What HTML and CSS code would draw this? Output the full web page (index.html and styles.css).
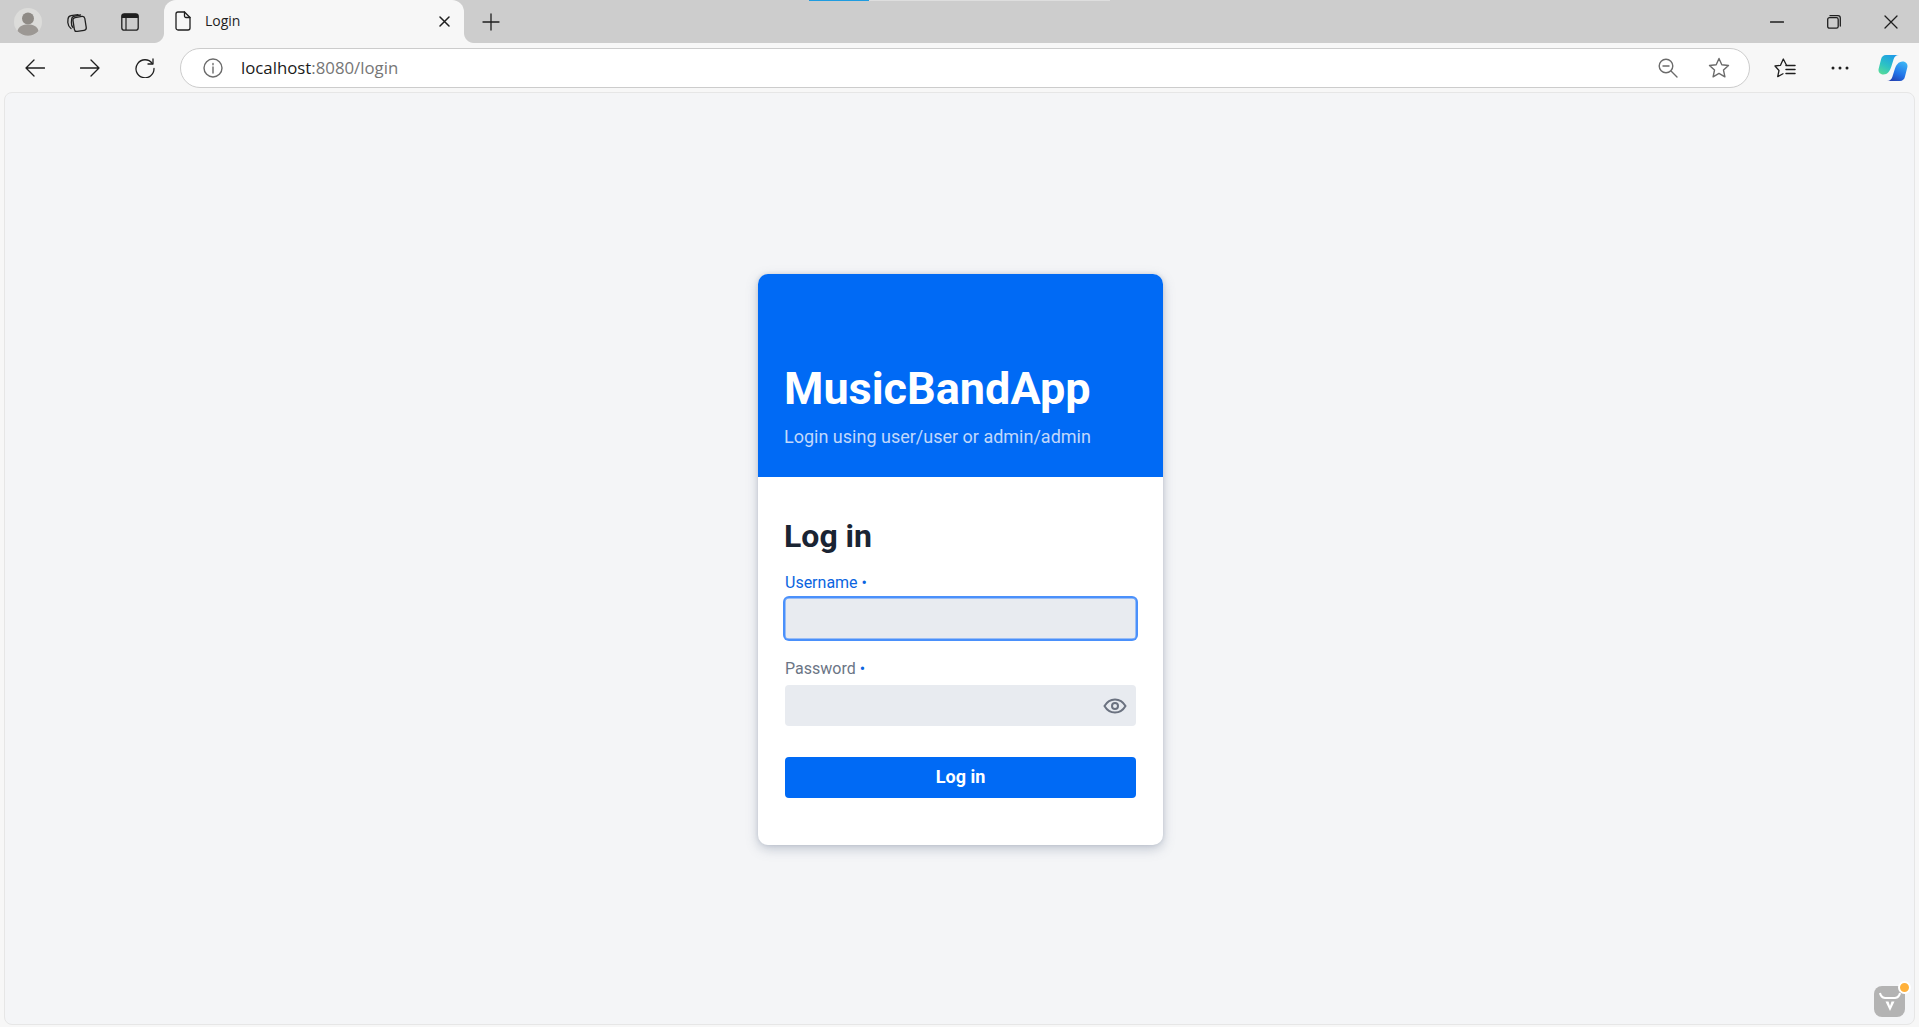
FILE: index.html
```html
<!DOCTYPE html>
<html lang="en">
<head>
<meta charset="utf-8">
<title>Login</title>
<link rel="stylesheet" href="styles.css">
</head>
<body>
<div class="loadbar"><span class="loadbar-fill"></span></div>
<header class="tabstrip">
  <button class="strip-btn strip-avatar"><svg width="28" height="28" viewBox="0 0 28 28"><circle cx="14" cy="14" r="14" fill="#dcdcda"/><circle cx="14" cy="10.5" r="6" fill="#8f8b86"/><path d="M3.5 23c1-5 5.500-6.500 10.500-6.500s9.500 1.500 10.500 6.500a14 14 0 0 1-21 0z" fill="#9c9894"/></svg></button>
  <button class="strip-btn"><svg class="ic" width="22" height="22" viewBox="0 0 22 22"><rect x="7.600" y="6" width="12" height="14" rx="2.500" transform="rotate(-9 13 13)"/><path d="M5 17.500C3 16 2 14 1.800 11.500L2 8c.2-2 1.500-3 3-3.300L12 3.600"/><path d="M7 16.500c-1.200-1.200-1.700-3-1.600-5L5.700 8c.2-1.500 1.300-2.500 3-2.800L14.500 4"/></svg></button>
  <button class="strip-btn"><svg width="20" height="20" viewBox="0 0 20 20"><rect x="1.800" y="1.800" width="16.400" height="16.400" rx="2.500" fill="none" stroke="#1f1f1f" stroke-width="1.300"/><path d="M1.800 4.500a2.500 2.500 0 0 1 2.500-2.700h11.400a2.500 2.500 0 0 1 2.500 2.700v1.500H1.800z" fill="#1f1f1f"/><path d="M6 6v12" stroke="#1f1f1f" stroke-width="1.200"/></svg></button>
  <div class="tab">
    <svg class="ic" width="16" height="20" viewBox="0 0 16 20"><path d="M3 1h6.500L15 6.500V17a2 2 0 0 1-2 2H3a2 2 0 0 1-2-2V3a2 2 0 0 1 2-2z"/><path d="M9.500 1v4a1.500 1.500 0 0 0 1.500 1.500h4"/></svg>
    <span class="tab-title">Login</span>
    <svg class="ic tab-close" width="11" height="11" viewBox="0 0 11 11"><path d="M1 1l9 9M10 1l-9 9" stroke-width="1.500"/></svg>
  </div>
  <button class="new-tab"><svg class="ic" width="18" height="18" viewBox="0 0 18 18"><path d="M9 1v16M1 9h16"/></svg></button>
  <div class="win-controls">
    <button class="win-btn"><svg class="ic" width="14" height="14" viewBox="0 0 14 14"><path d="M0.500 7h13"/></svg></button>
    <button class="win-btn"><svg class="ic" width="14" height="14" viewBox="0 0 14 14"><rect x="0.700" y="2.700" width="10.500" height="10.500" rx="1.800"/><path d="M3 .7h8a2.300 2.300 0 0 1 2.300 2.300v8"/></svg></button>
    <button class="win-btn"><svg class="ic" width="14" height="14" viewBox="0 0 14 14"><path d="M1 1l12 12M13 1L1 13"/></svg></button>
  </div>
</header>
<nav class="toolbar">
  <button class="tool-btn"><svg class="ic" width="20" height="18" viewBox="0 0 20 18"><path d="M19.500 9H1M9 1L1 9l8 8"/></svg></button>
  <button class="tool-btn"><svg class="ic" width="20" height="18" viewBox="0 0 20 18"><path d="M.5 9H19M11 1l8 8-8 8"/></svg></button>
  <button class="tool-btn"><svg class="ic" width="20" height="20" viewBox="0 0 20 20"><path d="M17.300 5.500A9 9 0 1 0 19 10.500"/><path d="M18 1v5h-5"/></svg></button>
  <div class="address">
    <svg class="ic-grey" width="20" height="20" viewBox="0 0 20 20"><circle cx="10" cy="10" r="9"/><path d="M10 9v6M10 5.500v1.300"/></svg>
    <span class="url"><span class="url-host">localhost</span>:8080/login</span>
    <svg class="ic-grey addr-zoom" width="20" height="20" viewBox="0 0 20 20"><circle cx="8" cy="8" r="6.800"/><path d="M13 13l6 6M5 8h6"/></svg>
    <svg class="ic-grey addr-star" width="22" height="21" viewBox="0 0 22 21"><path d="M11 1.500l2.800 6.300 6.700.7-5 4.600 1.400 6.700-5.900-3.400-5.900 3.400 1.400-6.700-5-4.600 6.700-.7z"/></svg>
  </div>
  <button class="tool-btn"><svg class="ic" width="22" height="20" viewBox="0 0 22 20"><path d="M12.500 7.200L9.300 1 6.500 7.300 1 8l4 4.500-1.300 6.200 5.300-2.900"/><path d="M12 7.500h9M12 11.500h9M12 15.500h9" stroke-width="1.500"/></svg></button>
  <button class="tool-btn tool-more"><svg width="18" height="4" viewBox="0 0 18 4"><circle cx="2" cy="2" r="1.500" fill="#1f1f1f"/><circle cx="9" cy="2" r="1.500" fill="#1f1f1f"/><circle cx="16" cy="2" r="1.500" fill="#1f1f1f"/></svg></button>
  <button class="tool-btn"><svg width="30" height="28" viewBox="0 0 30 28"><defs><linearGradient id="cpA" x1="0.700" y1="0" x2="0.150" y2="1"><stop offset="0" stop-color="#1e9be8"/><stop offset="0.550" stop-color="#2cc2c4"/><stop offset="1" stop-color="#58dc98"/></linearGradient><linearGradient id="cpB" x1="0.800" y1="0" x2="0.300" y2="1"><stop offset="0" stop-color="#3cb6f5"/><stop offset="0.600" stop-color="#2273e8"/><stop offset="1" stop-color="#2443b4"/></linearGradient></defs><path fill="url(#cpA)" d="M8 1h13c-3 0-4.600 1.800-5.400 4.200L13.500 12c-1.500 5-4 8.500-8 8.500C2 20.500 0 18 .6 15L3 5.500C3.600 2.600 5.500 1 8 1z"/><path fill="url(#cpB)" d="M22 27H9c3 0 4.600-1.800 5.400-4.200L16.500 16c1.500-5 4-8.500 8-8.500 3.500 0 5.500 2.500 4.900 5.500L27 22.500c-.6 2.900-2.500 4.500-5 4.500z"/></svg></button>
</nav>
<main class="page">
  <section class="card">
    <div class="card-head">
      <h1 class="brand">MusicBandApp</h1>
      <p class="hint">Login using user/user or admin/admin</p>
    </div>
    <form class="card-body">
      <h2 class="form-title">Log in</h2>
      <div class="field">
        <label class="label label-focus">Username<span class="req">•</span></label>
        <div class="input input-focus"></div>
      </div>
      <div class="field field-second">
        <label class="label">Password<span class="req">•</span></label>
        <div class="input"><svg class="eye" width="24" height="16" viewBox="0 0 24 16"><path d="M1.500 8C4 3.700 7.800 1.500 12 1.500S20 3.700 22.500 8C20 12.300 16.200 14.500 12 14.500S4 12.300 1.500 8z"/><circle cx="12" cy="8" r="3"/></svg></div>
      </div>
      <button type="button" class="submit">Log in</button>
    </form>
  </section>
  <div class="dev-badge">
    <svg width="22" height="20" viewBox="0 0 22 20"><path d="M1 1c.5 3 2 4.500 5 5h10c3-.5 4.500-2 5-5" fill="none" stroke="#fff" stroke-width="2"/><path d="M6.500 9.500h3L11 14l1.500-4.500h3L11 19z" fill="#fff"/></svg>
    <span class="dev-dot"></span>
  </div>
</main>
</body>
</html>
```
FILE: styles.css
```css
* { box-sizing: border-box; }
html, body { margin: 0; height: 100%; overflow: hidden; }
body {
  display: flex;
  flex-direction: column;
  background: #f7f7f7;
  font-family: "Open Sans", sans-serif;
  color: #1f1f1f;
}
button { border: 0; padding: 0; background: none; font: inherit; display: flex; align-items: center; justify-content: center; }
svg { display: block; }
.ic { fill: none; stroke: #1f1f1f; stroke-width: 1.300; stroke-linecap: round; stroke-linejoin: round; }
.ic-grey { fill: none; stroke: #6b6b6b; stroke-width: 1.400; stroke-linecap: round; stroke-linejoin: round; }

.loadbar { position: absolute; top: 0; left: 809px; width: 301px; height: 1px; background: #dedede; z-index: 2; }
.loadbar-fill { display: block; width: 60px; height: 1px; background: #1f9ce0; }

.tabstrip { display: flex; align-items: center; height: 43px; background: #cdcdcd; padding-left: 6px; flex: none; }
.strip-btn { width: 44px; height: 42px; margin-right: 9px; }
.strip-avatar { margin-right: 5px; }
.tab {
  position: relative;
  display: flex; align-items: center;
  width: 300px; height: 43px;
  margin-left: 3px;
  padding: 0 14px 1px 11px;
  background: #f7f7f7;
  border-radius: 12px 12px 0 0;
}
.tab::before, .tab::after {
  content: ""; position: absolute; bottom: 0; width: 10px; height: 10px;
  background: radial-gradient(circle at 0 0, #cdcdcd 9.500px, #f7f7f7 10.500px);
}
.tab::before { left: -10px; }
.tab::after { right: -10px; background: radial-gradient(circle at 100% 0, #cdcdcd 9.500px, #f7f7f7 10.500px); }
.tab-title { margin-left: 14px; margin-top: -2px; font-size: 14px; }
.tab-close { margin-left: auto; }
.new-tab { width: 44px; height: 42px; margin-left: 5px; }
.win-controls { display: flex; margin-left: auto; }
.win-btn { width: 57px; height: 42px; }

.toolbar { display: flex; align-items: center; height: 49px; padding: 0 4px 0 13px; flex: none; background: #f7f7f7; }
.tool-btn { width: 44px; height: 40px; margin-right: 11px; }
.tool-btn:last-child { margin-right: 0; }
.tool-more { margin-right: 9px; }
.address {
  display: flex; align-items: center;
  flex: 1; height: 40px;
  margin: 0 13px 0 2px;
  padding: 0 19px 0 22px;
  background: #fff;
  border: 1px solid #cccccc;
  border-radius: 20px;
}
.url { margin-left: 18px; font-size: 16.800px; color: #767676; }
.url-host { color: #1a1a1a; }
.addr-zoom { margin-left: auto; }
.addr-star { margin-left: 30px; }

.page {
  position: relative;
  flex: 1;
  display: flex; align-items: center; justify-content: center;
  margin: 0 4px 2px;
  padding: 2px 0 0 2px;
  background: #f4f5f7;
  border: 1px solid #e6e6e6;
  border-radius: 8px;
  font-family: Roboto, sans-serif;
}
.card {
  width: 405px; height: 571px;
  background: #fff;
  border-radius: 10px;
  overflow: hidden;
  box-shadow: 0 4px 12px rgba(100, 116, 139, .35), 0 0 4px rgba(100, 116, 139, .2);
}
.card-head { height: 203px; padding: 89px 27px 0 26px; background: #006af5; }
.brand { margin: 0; font-size: 45px; line-height: 52px; font-weight: 700; color: #fff; }
.hint { margin: 9px 0 0; font-size: 18px; line-height: 26px; color: #c0d8fc; }
.card-body { padding: 41px 27px 0; }
.form-title { margin: 0 0 0 -1px; font-size: 32px; line-height: 36px; font-weight: 700; color: #1a2433; }
.field { margin-top: 17px; }
.field-second { margin-top: 18px; }
.label { display: block; height: 24px; margin-bottom: 3px; font-size: 16px; line-height: 24px; color: #6b7585; }
.field-second .label { margin-bottom: 4px; }
.label-focus { color: #0a64e0; }
.req { margin-left: 4px; font-size: 16px; color: #0a64e0; }
.input { display: flex; align-items: center; justify-content: flex-end; height: 41px; padding-right: 9px; background: #e8ebf0; border-radius: 4px; }
.input-focus { box-shadow: 0 0 0 2px #4a90fb, inset 0 0 0 .5px #4a90fb; border-radius: 4px; }
.eye { fill: none; stroke: #6b7280; stroke-width: 2; }
.submit { width: 100%; height: 41px; margin-top: 31px; padding-bottom: 2px; background: #006af5; border-radius: 4px; color: #fff; font-family: Roboto, sans-serif; font-size: 18px; font-weight: 700; }

.dev-badge {
  position: absolute; right: 9px; bottom: 7px;
  display: flex; align-items: center; justify-content: center;
  width: 31px; height: 31px;
  background: #b3b3b3; border-radius: 8px;
}
.dev-dot {
  position: absolute; top: -5px; right: -6px;
  width: 13px; height: 13px;
  background: #ffb13b;
  border: 2px solid #fff;
  border-radius: 50%;
}
```
